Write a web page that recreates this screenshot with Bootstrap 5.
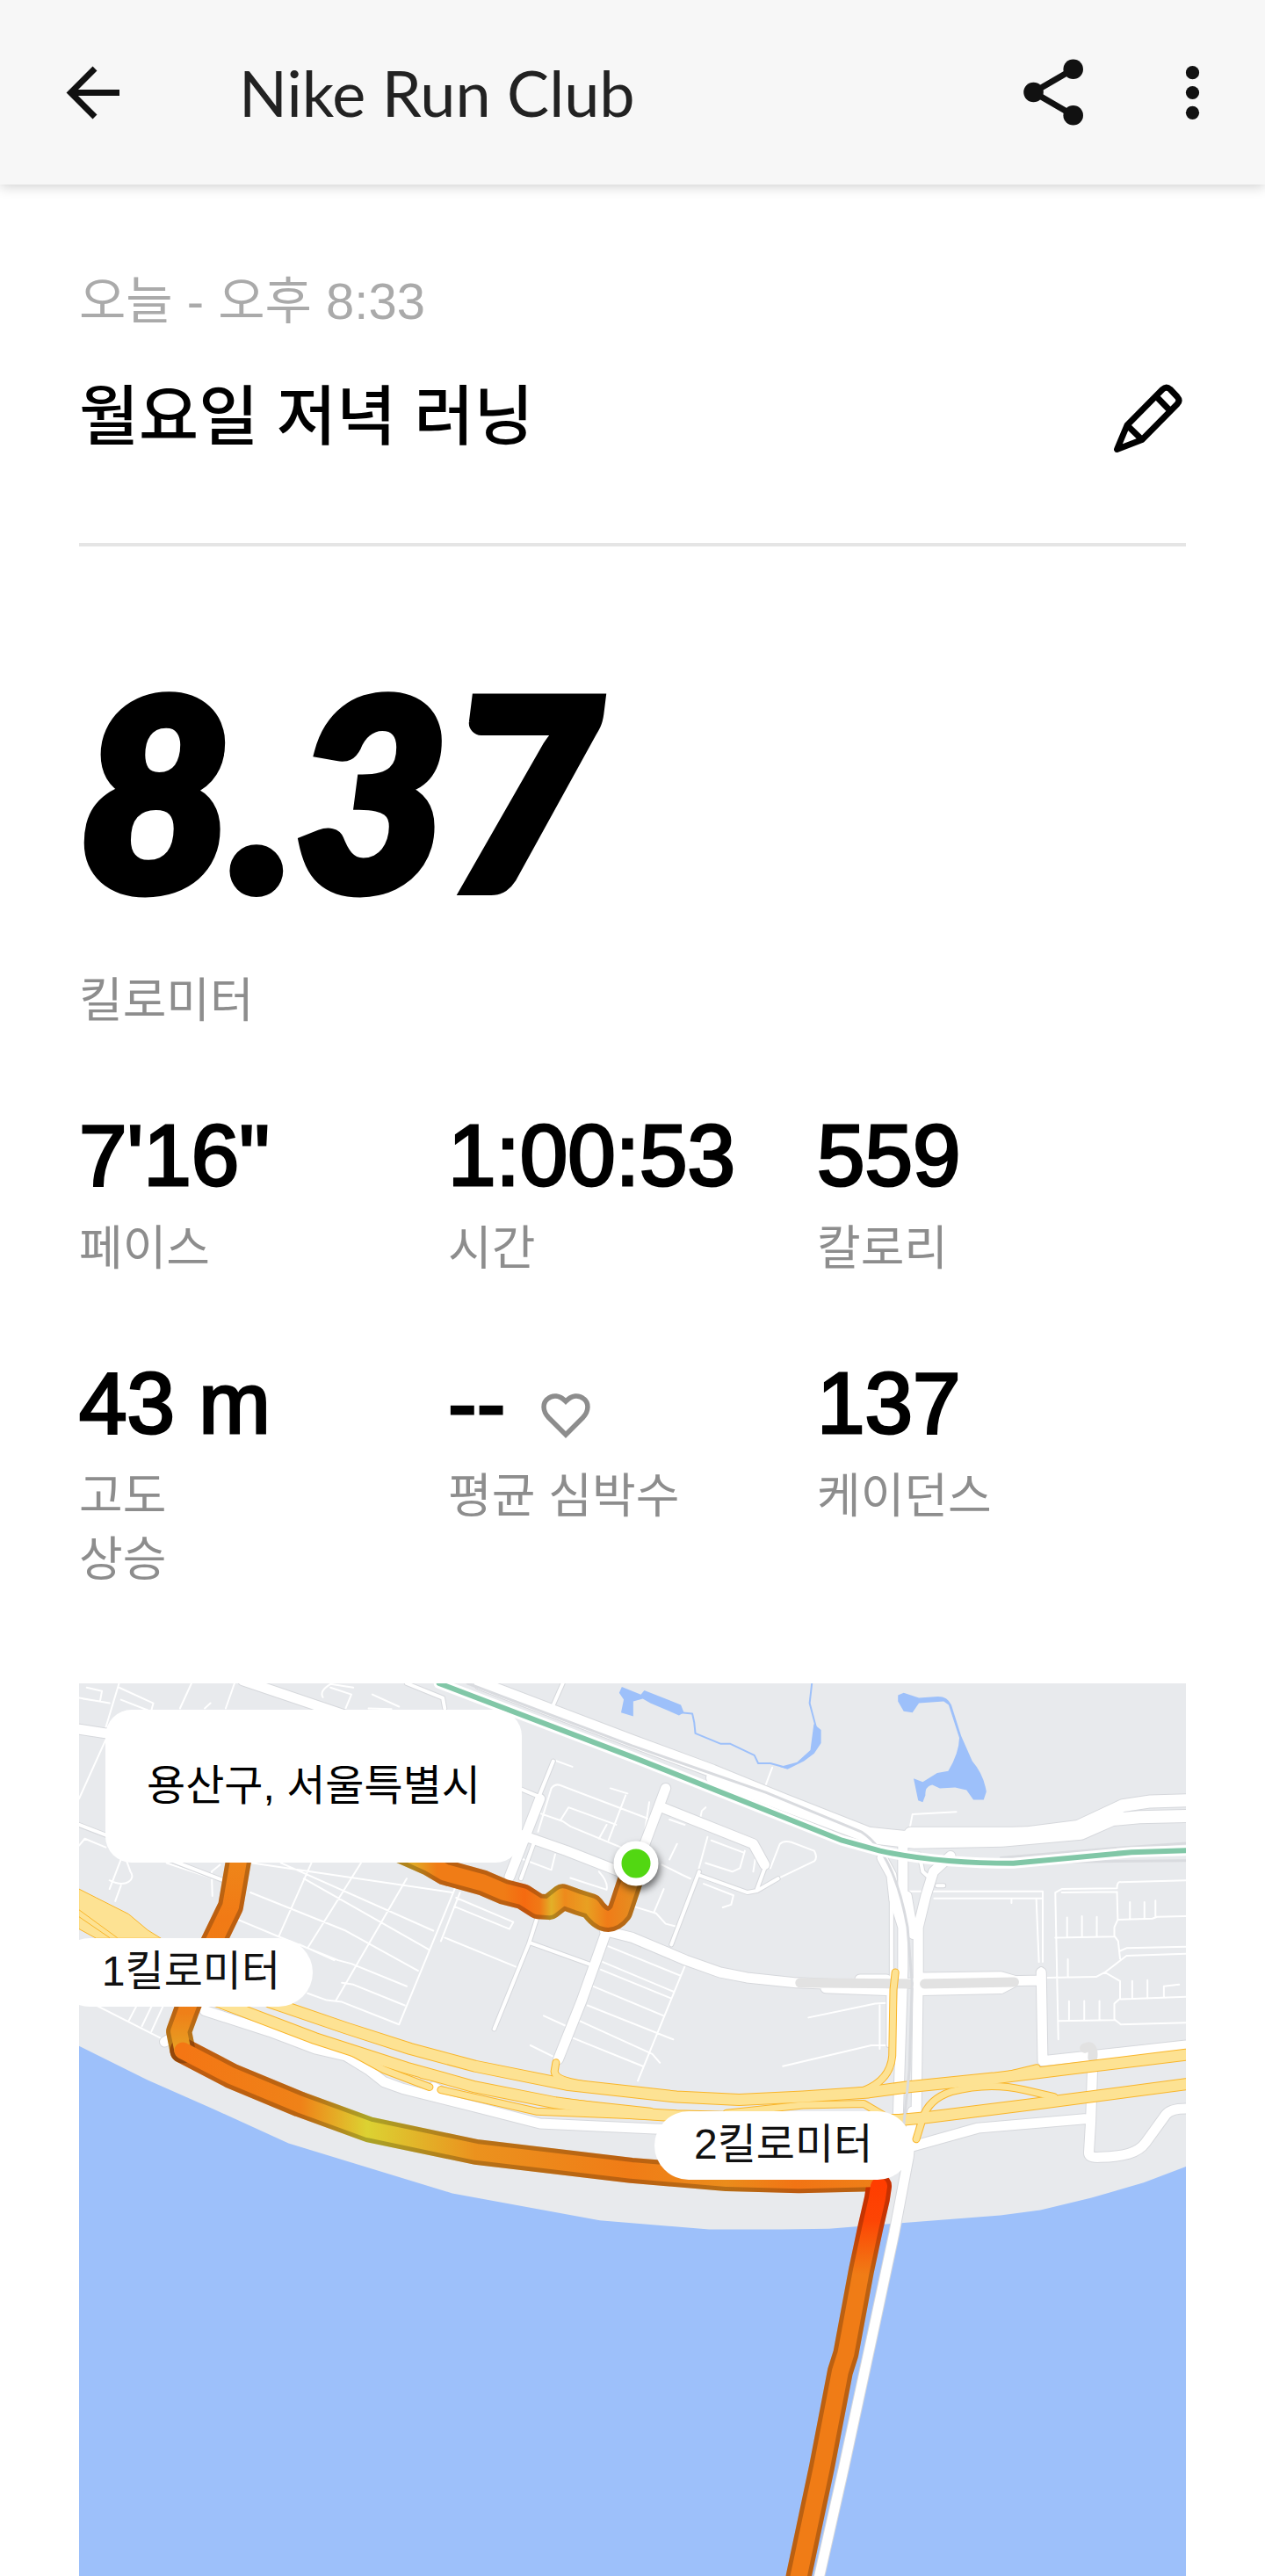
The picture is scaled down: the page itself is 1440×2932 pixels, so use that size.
<!DOCTYPE html>
<html lang="ko">
<head>
<meta charset="utf-8">
<meta name="viewport" content="width=device-width, initial-scale=1">
<title>Nike Run Club</title>
<link href="https://cdn.jsdelivr.net/npm/bootstrap@5.3.0/dist/css/bootstrap.min.css" rel="stylesheet">
<style>
body{font-family:"Liberation Sans","Noto Sans CJK KR",sans-serif;color:#000;background:#fff}
.topbar{height:210px;padding:0 60px;background:#f7f7f7;box-shadow:0 2px 14px rgba(0,0,0,.2);position:relative}
.topbar .app-name{font-family:Lato,sans-serif;font-size:72px;line-height:80px;color:#222;margin-left:112px}
.topbar .share{margin-right:92px}
.page{padding:97px 90px 0}
.run-date{font-size:58px;line-height:72px;color:#aaa}
.run-title{font-size:74px;line-height:96px;font-weight:500}
.run-head{padding-bottom:95px;border-bottom:4px solid #e5e5e5}
.distance{font-family:Lato,sans-serif;font-weight:900;font-style:italic;font-size:300px;line-height:320px;margin-top:115px;-webkit-text-stroke:12px #000}
.unit{font-size:54px;line-height:72px;color:#8d8d8d}
.distance + .unit{margin-top:46px}
.stat-value{font-size:98px;line-height:104px;-webkit-text-stroke:3px #000}
.stat-value .heart{margin-left:36px}
.stats{row-gap:16px;margin-top:88px}
.stats .unit{margin-top:18px;min-height:144px}
.map-area{margin-top:105px;aspect-ratio:1260/1017;background:#e8eaed}
.tiles path{vector-effect:non-scaling-stroke}
.place{left:30px;top:30px;width:474px;height:174px;border-radius:30px;font-size:48px}
.km-pill{width:293px;height:78px;border-radius:39px;font-size:48px;line-height:76px;color:#111}
.km-one{left:-27px;top:28.5%;padding-left:16px}
.km-two{left:52%;top:47.9%}
.start-dot{left:50.3%;top:20.2%;width:51px;height:51px;border:9px solid #fff;background:#52d712;box-shadow:2px 5px 8px rgba(0,0,0,.55)}
</style>
<script src="https://cdn.jsdelivr.net/npm/bootstrap@5.3.0/dist/js/bootstrap.bundle.min.js"></script>
</head>
<body>
<header class="topbar d-flex align-items-center">
  <button class="btn border-0 p-0" type="button" aria-label="뒤로">
    <svg class="d-block" width="100" height="90" viewBox="60 60 100 90" fill="none" stroke="#111" stroke-width="7"><path d="M136 105.500H80M108 78 80.500 105.500 108 133"/></svg>
  </button>
  <h1 class="app-name fw-normal mb-0 me-auto">Nike Run Club</h1>
  <button class="btn border-0 p-0 share" type="button" aria-label="공유">
    <svg class="d-block" width="92" height="90" viewBox="1155 60 92 90" fill="#111"><path d="M1220.700 78.700 1175.500 105 1220.700 131.300" fill="none" stroke="#111" stroke-width="7"/><circle cx="1220.700" cy="78.700" r="11.300"/><circle cx="1175.500" cy="105" r="11.300"/><circle cx="1220.700" cy="131.300" r="11.300"/></svg>
  </button>
  <button class="btn border-0 p-0" type="button" aria-label="더보기">
    <svg class="d-block" width="40" height="90" viewBox="1339 60 40 90" fill="#111"><circle cx="1356.500" cy="82.700" r="7.600"/><circle cx="1356.500" cy="105.500" r="7.600"/><circle cx="1356.500" cy="128.300" r="7.600"/></svg>
  </button>
</header>

<main class="page">
  <section class="run-head">
    <p class="run-date mb-0">오늘 - 오후 8:33</p>
    <div class="d-flex justify-content-between align-items-center mt-5">
      <h2 class="run-title mb-0">월요일 저녁 러닝</h2>
      <button class="btn border-0 p-0" type="button" aria-label="이름 편집">
        <svg class="d-block" width="84" height="84" viewBox="1266 434 84 84" fill="none" stroke="#000" stroke-width="7" stroke-linejoin="round"><path d="M1283 485 1323 444.500Q1327.500 440 1332 444L1340 452.500Q1344 457 1340 461L1300 501.500 1271.500 512.500ZM1316 452 1332 468.500M1283 485 1300 501.500"/></svg>
      </button>
    </div>
  </section>

  <section>
    <div class="distance">8.37</div>
    <div class="unit">킬로미터</div>
    <div class="row gx-0 stats">
      <div class="col-4"><div class="stat-value">7'16"</div><div class="unit">페이스</div></div>
      <div class="col-4"><div class="stat-value">1:00:53</div><div class="unit">시간</div></div>
      <div class="col-4"><div class="stat-value">559</div><div class="unit">칼로리</div></div>
      <div class="col-4"><div class="stat-value">43 m</div><div class="unit">고도<br>상승</div></div>
      <div class="col-4">
        <div class="stat-value d-flex align-items-center">--
          <svg class="heart" width="66" height="66" viewBox="612 1562 66 66" overflow="visible" fill="none" stroke="#8d8d8d" stroke-width="5.500"><path d="M645 1631 625.500 1611.500C618 1603.500 619 1594.500 624 1590.500 630.500 1585 638 1586 645 1593 652 1586 659.500 1585 666 1590.500 671 1594.500 672 1603.500 664.500 1611.500Z"/></svg>
        </div>
        <div class="unit">평균 심박수</div>
      </div>
      <div class="col-4"><div class="stat-value">137</div><div class="unit">케이던스</div></div>
    </div>
  </section>

  <section class="map-area position-relative overflow-hidden" aria-label="러닝 경로 지도">
    <svg class="tiles d-block w-100 h-100" viewBox="0 38 2906 2572" preserveAspectRatio="none" fill="none" stroke-linejoin="round" stroke-linecap="round">
      <defs>
        <path id="thin" d="M70 165 105 38M265 110 295 38M385 110 408 38M0 165 70 180M0 370 70 200M0 445 72 480M0 80 80 95M20 50 60 60 55 90 10 82M105 50 195 95 190 115M110 85 180 115M720 50 660 40Q630 60 640 78M660 50 715 70 700 110M770 70 840 105M760 110 820 112M330 110 345 95
          M350 650 348 580 370 560M80 630 110 545M95 665 110 620M80 605C125 630 150 600 135 580L125 550M0 505 15 485 70 510
          M455 555 980 640M230 555 380 610M410 715 520 765 680 835 715 845 860 910M450 640 700 750 890 865M530 555 930 750M590 600 920 805M610 555 525 765M740 555 600 800M860 600 675 950M990 620 840 1020M1000 640 950 780M600 930 650 950 690 955 840 1020M580 790 670 835M690 900 720 905 855 965M960 770 1150 855M985 680 1130 745 1140 725 990 655
          M45 965 225 1065M130 1010 150 968M165 1025 190 968M190 1040 220 968
          M1205 410 1270 435 1290 450 1500 545M1205 465 1240 340Q1250 325 1265 332L1500 430M1440 355 1395 340M1435 360 1390 490M1265 430 1285 395 1410 445M1365 485 1385 445M1480 500 1497 380M1245 258 1295 278M1155 540 1240 575 1250 530M1290 598 1385 632Q1390 610 1365 580
          M1390 795 1580 880M1375 840 1560 925M1370 862 1555 945M1350 910 1535 995M1335 965 1560 1063M1315 1010 1505 1105 1525 1130M1295 1058 1480 1140M1220 995 1280 1025M1185 1080 1250 1115M1593 845 1467 1182
          M1550 545 1570 500M1590 445 1550 430M1530 560 1585 590 1605 600M1510 695 1535 630M1455 680 1515 700 1540 730 1568 738M1650 480 1625 580M1660 490 1745 525M1645 555 1715 580 1735 570 1748 520M1640 615 1718 648 1712 675 1690 683M1770 580 1775 545M1540 395 1620 425M1630 430 1635 405 1645 395M1835 600 1930 550Q1940 540 1930 520L1870 495Q1850 490 1840 500L1815 570M1803 330 1820 280M2180 460 2188 415 2303 408M1915 1000 2090 960 2120 958M2102 965V1090M1848 1140 2080 1080 2120 1080
          M2175 637 2530 637V840M2245 657H2530M2448 657V670M2513 657 2520 840M2571 1063 2563 640 2580 630 2725 628Q2725 608 2735 610L2906 605M2580 640 2725 638M2725 638 2727 718 2818 715 2830 710 2906 708M2727 718 2718 740V765L2728 780 2733 830M2563 770 2718 767M2733 808 2750 800 2906 796M2693 870 2750 822 2906 816M2540 885 2670 883 2693 870 2733 895V945L2718 960V1005L2735 1020 2906 1015M2735 947 2906 940M2571 1010 2718 1007M2594 768V712M2633 768V708M2672 768V710M2759 715V668M2797 715V668M2826 712V663M2596 880V832M2599 1005V953M2639 1005V952M2679 1005V952M2765 945V895M2805 945V892M2848 940V910L2888 905"/>
        <path id="street" d="M1245 262 1205 370M1205 705 1180 790 1090 1033M1185 785 1350 850M1155 340 1210 365M1628 580 1555 790M1628 590 1755 640 1780 635 1835 600M1800 570 1780 630M1160 600 1200 480M2133 655V880M2125 925V1080M2206 530 2215 580 2235 600M2253 620H2270M0 445 390 610M860 38 955 80 960 110M1245 100 1270 38M2526 860V885"/>
        <path id="road" d="M0 170 70 182M430 30 700 130M1210 370 1130 595M1150 470 1280 520 1420 580M1540 340 1475 530 1455 590M1530 395 1770 500 1800 560M1385 750 1320 950 1258 1120M1380 750 1453 770 1593 835 1683 870 1753 885 1883 900 2000 905 2526 893M1960 915 2120 922M2213 922 2420 917 2450 900M2050 890H2120M2213 885 2420 882 2460 895
          M330 980 500 1040 620 1090 700 1110 760 1150 800 1185 850 1205 1050 1260 1210 1305 1510 1320 1650 1325M225 1070 240 1060M930 1200 945 1208M2190 1370 2360 1318 2640 1292M2661 1130 2656 1300 2651 1390Q2652 1404 2680 1402C2743 1400 2780 1390 2800 1360L2853 1280Q2865 1262 2906 1262M2526 870 2530 1125 2906 1080
          M2163 500V860L2150 1290M2288 535 2243 580 2223 650 2203 740V880L2198 1290M2108 540 2133 590 2140 660 2163 740M2173 650 2190 760M2188 1270 2178 1400 2140 1620 2084 1908 2008 2294 1943 2610"/>
        <path id="avenue" d="M1053 38 1453 205 1663 290 1853 375 2073 470 2163 480 2423 478 2623 450 2740 390 2813 378 2906 375M1663 310 2073 480 2193 495 2423 490 2630 470 2713 430 2783 423 2906 420M1950 420 2093 480M2183 470 2450 470 2600 465"/>
        <path id="highway" d="M500 955 700 1030 870 1090 1040 1140 1280 1193 1568 1228 1733 1237 1900 1228 2073 1215 2173 1200 2400 1175 2600 1148 2906 1107M380 960 620 1060 860 1145 1040 1200 1250 1245 1450 1275 1568 1283 1800 1290 2153 1295 2223 1288 2500 1250 2906 1192"/>
        <path id="ramp" d="M350 955 500 1010 700 1090 800 1150 920 1200M900 1165 1200 1235 1500 1270M950 1208 1200 1270 1530 1285M1252 1130 1248 1155Q1250 1175 1290 1185L1400 1210M2143 870 2138 920 2135 1110Q2130 1180 2060 1210L1970 1222M2198 1350 2215 1290Q2230 1235 2290 1213C2370 1190 2430 1195 2480 1208L2560 1228M1700 1275 1900 1252 2060 1248 2110 1280M2400 1175 2515 1145"/>
        <path id="run-south" d="M2100 1485 2095 1522 2077 1608 2053 1732 2013 1968 1998 2020 1950 2294 1889 2610"/>
        <path id="run-west" d="M420 540 398 680 345 800 282 980 262 1040 272 1095"/>
        <path id="run-shore" d="M272 1095 400 1168 580 1250 760 1322 1042 1387 1450 1440 1700 1463 1890 1469 2085 1464"/>
        <path id="run-start" d="M830 512 920 556 960 582 1060 612 1115 638 1165 652 1205 680 1235 682 1270 652 1310 668 1345 680Q1385 745 1420 695L1461 560"/>
        <linearGradient id="g-shore" gradientUnits="userSpaceOnUse" x1="272" y1="0" x2="2100" y2="0"><stop offset="0" stop-color="#f47614"/><stop offset=".17" stop-color="#ef8218"/><stop offset=".265" stop-color="#dcd232"/><stop offset=".34" stop-color="#e2b329"/><stop offset=".42" stop-color="#eb921e"/><stop offset=".64" stop-color="#f07c16"/><stop offset=".78" stop-color="#eb8c1b"/><stop offset=".88" stop-color="#f27414"/><stop offset="1" stop-color="#ee8018"/></linearGradient>
        <linearGradient id="g-west" gradientUnits="userSpaceOnUse" x1="0" y1="554" x2="0" y2="1095"><stop offset="0" stop-color="#ef8519"/><stop offset=".3" stop-color="#f17a15"/><stop offset=".8" stop-color="#ef8018"/><stop offset="1" stop-color="#e6a023"/></linearGradient>
        <linearGradient id="g-south" gradientUnits="userSpaceOnUse" x1="0" y1="1480" x2="0" y2="1740"><stop offset="0" stop-color="#ff3d00"/><stop offset=".4" stop-color="#fd4504"/><stop offset="1" stop-color="#f07c16"/></linearGradient>
        <linearGradient id="g-start" gradientUnits="userSpaceOnUse" x1="880" y1="0" x2="1470" y2="0"><stop offset="0" stop-color="#e2a825"/><stop offset=".1" stop-color="#f07c16"/><stop offset=".4" stop-color="#f07c16"/><stop offset=".49" stop-color="#f56a10"/><stop offset=".56" stop-color="#f07a16"/><stop offset=".61" stop-color="#e2b028"/><stop offset=".67" stop-color="#ee8a1c"/><stop offset=".77" stop-color="#e8a022"/><stop offset=".86" stop-color="#f07c18"/><stop offset="1" stop-color="#e39122"/></linearGradient>
      </defs>

      <g fill="#9dc0fa">
        <path d="M0 1082 180 1180 350 1262 550 1362 980 1506 1367 1584 1654 1610 1845 1610 1969 1608 2151 1592 2419 1569 2524 1554 2658 1519 2795 1475 2906 1429V2610H0Z"/>
        <path d="M1425 48 1475 70 1484 58 1580 100 1588 122 1575 130 1500 95 1480 82 1455 90 1455 133 1423 122 1430 85 1418 65Z"/>
        <path d="M2150 72 2165 65 2205 80 2255 76Q2280 76 2290 100L2316 190 2345 262Q2375 300 2382 350L2375 373H2348L2330 345 2300 338 2260 340 2240 330Q2220 335 2222 360L2215 380 2203 375 2191 312 2215 322 2253 296 2282 290Q2310 240 2311 195L2283 100 2270 90 2205 95 2188 122 2165 118 2150 90Z"/>
        <path d="M1929 155 1948 172V210L1930 240 1903 262 1860 285 1840 278 1885 265 1920 230Z"/>
      </g>
      <path d="M1580 122 1610 125 1615 150 1618 182 1685 212 1710 212 1773 245 1783 268 1815 268 1855 280M1924 38 1918 95 1935 165" stroke="#9dc0fa" stroke-width="2"/>

      <use href="#thin" stroke="#fff" stroke-width="2"/>
      <g stroke="#d6d8dc">
        <use href="#street" stroke-width="6"/><use href="#road" stroke-width="13"/><use href="#avenue" stroke-width="16"/>
      </g>
      <g stroke="#fff">
        <use href="#street" stroke-width="4"/><use href="#road" stroke-width="11"/><use href="#avenue" stroke-width="14"/>
      </g>
      <path d="M1893 900 2178 903M2220 903 2455 898M2640 1088Q2665 1075 2661 1115" stroke="#e2e2e2" stroke-width="11"/>
      <path d="M0 630 45 655 130 702 180 748 215 772H45L0 745Z" fill="#fde293" stroke="#f9b529" stroke-width="1"/>
      <path d="M0 690 100 770M0 710 80 770" stroke="#f9b529" stroke-width="1"/>
      <g stroke="#f9b529"><use href="#ramp" stroke-width="9"/><use href="#highway" stroke-width="14"/></g>
      <g stroke="#fde293"><use href="#ramp" stroke-width="7"/><use href="#highway" stroke-width="12"/></g>
      <path d="M1020 38 1453 218 1803 352 2053 465Q2140 525 2175 740L2187 900 2180 1150 2165 1310M2420 540 2720 512 2906 498M2600 552 2906 548" stroke="#d9dbdf" stroke-width="3"/>
      <g id="rail">
        <path d="M945 38 1453 250 2003 490 2103 520Q2250 556 2453 556L2763 524 2906 519" stroke="#fff" stroke-width="12"/>
        <path d="M945 38 1453 250 2003 490 2103 520Q2250 556 2453 556L2763 524 2906 519" stroke="#81c7a7" stroke-width="6"/>
      </g>

      <g stroke-width="29">
        <use href="#run-west" stroke="url(#g-west)"/><use href="#run-shore" stroke="url(#g-shore)"/><use href="#run-start" stroke="url(#g-start)"/>
        <use href="#run-west" stroke="#000" stroke-opacity=".22"/>
        <use href="#run-start" stroke="#000" stroke-opacity=".22"/><use href="#run-shore" stroke="#000" stroke-opacity=".22"/>
        <use href="#run-south" stroke="url(#g-south)"/><use href="#run-south" stroke="#000" stroke-opacity=".22"/>
      </g>
      <g stroke-width="19">
        <use href="#run-west" stroke="url(#g-west)"/><use href="#run-shore" stroke="url(#g-shore)"/><use href="#run-start" stroke="url(#g-start)"/><use href="#run-south" stroke="url(#g-south)"/>
      </g>
    </svg>
    <span class="start-dot position-absolute translate-middle rounded-circle"></span>
    <div class="place position-absolute bg-white d-flex align-items-center justify-content-center">용산구, 서울특별시</div>
    <div class="km-pill km-one position-absolute bg-white text-center">1킬로미터</div>
    <div class="km-pill km-two position-absolute bg-white text-center">2킬로미터</div>
  </section>
</main>
</body>
</html>
